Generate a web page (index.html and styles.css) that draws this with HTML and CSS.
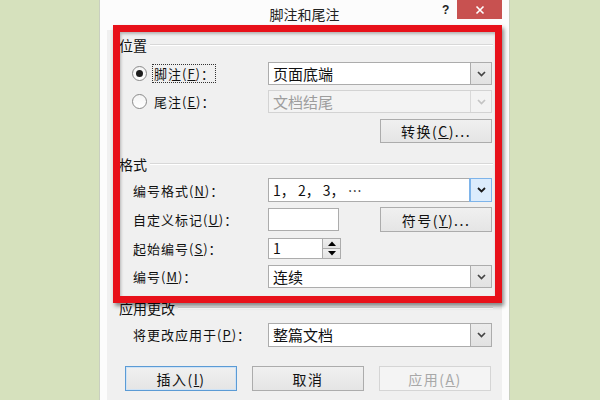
FILE: index.html
```html
<!DOCTYPE html>
<html lang="zh-CN">
<head>
    <meta charset="UTF-8">
    <title>脚注和尾注</title>
    <link rel="stylesheet" href="styles.css">
</head>
<body>
    <div class="dialog">
        <div class="titlebar">
            <span class="title">脚注和尾注</span>
            <span class="help">?</span>
            <span class="close">
                <svg width="10" height="10" viewBox="0 0 10 10"><path d="M1.5 1.5l7 7M8.5 1.5l-7 7" stroke="#fff" stroke-width="1.6"/></svg>
            </span>
        </div>

        <div class="client">
            <div class="group"><span>位置</span></div>

            <div class="row h23 first">
                <div class="label radio-label">
                    <span class="radio checked"></span>
                    <span class="focus">脚注(<u>F</u>)：</span>
                </div>
                <div class="select">
                    <span class="value">页面底端</span>
                    <span class="drop"><svg width="9" height="6" viewBox="0 0 9 6"><path d="M1 1l3.5 3.5L8 1" stroke="#444" stroke-width="1.7" fill="none"/></svg></span>
                </div>
            </div>

            <div class="row h23 gap5">
                <div class="label radio-label">
                    <span class="radio"></span>
                    <span class="nofocus">尾注(<u>E</u>)：</span>
                </div>
                <div class="select disabled">
                    <span class="value">文档结尾</span>
                    <span class="drop"><svg width="9" height="6" viewBox="0 0 9 6"><path d="M1 1l3.5 3.5L8 1" stroke="#c4c4c4" stroke-width="1.7" fill="none"/></svg></span>
                </div>
            </div>

            <div class="row h24 gap6">
                <button class="btn push-right">转换(<u>C</u>)...</button>
            </div>

            <div class="group second"><span>格式</span></div>

            <div class="row h24 gap3">
                <div class="label">编号格式(<u>N</u>)：</div>
                <div class="select focused">
                    <span class="value">1，&nbsp;2，&nbsp;3，&nbsp;…</span>
                    <span class="drop"><svg width="9" height="6" viewBox="0 0 9 6"><path d="M1 1l3.5 3.5L8 1" stroke="#1a1a1a" stroke-width="1.8" fill="none"/></svg></span>
                </div>
            </div>

            <div class="row h25 gap5">
                <div class="label">自定义标记(<u>U</u>)：</div>
                <div class="textbox"></div>
                <button class="btn push-right">符号(<u>Y</u>)...</button>
            </div>

            <div class="row h21 gap6">
                <div class="label">起始编号(<u>S</u>)：</div>
                <div class="spin">
                    <span class="value">1</span>
                    <span class="arrows">
                        <span class="arrow"><svg width="8" height="5" viewBox="0 0 8 5"><path d="M0 5L4 0.5L8 5z" fill="#000"/></svg></span>
                        <span class="arrow"><svg width="8" height="5" viewBox="0 0 8 5"><path d="M0 0L4 4.5L8 0z" fill="#000"/></svg></span>
                    </span>
                </div>
            </div>

            <div class="row h23 gap6">
                <div class="label">编号(<u>M</u>)：</div>
                <div class="select">
                    <span class="value">连续</span>
                    <span class="drop"><svg width="9" height="6" viewBox="0 0 9 6"><path d="M1 1l3.5 3.5L8 1" stroke="#444" stroke-width="1.7" fill="none"/></svg></span>
                </div>
            </div>

            <div class="group third"><span>应用更改</span></div>

            <div class="row h25 gap3">
                <div class="label">将更改应用于(<u>P</u>)：</div>
                <div class="select">
                    <span class="value">整篇文档</span>
                    <span class="drop"><svg width="9" height="6" viewBox="0 0 9 6"><path d="M1 1l3.5 3.5L8 1" stroke="#444" stroke-width="1.7" fill="none"/></svg></span>
                </div>
            </div>

            <div class="buttons">
                <button class="btn default">插入(<u>I</u>)</button>
                <button class="btn">取消</button>
                <button class="btn" disabled>应用(<u>A</u>)</button>
            </div>
        </div>
    </div>

    <!-- red annotation frame drawn over the dialog -->
    <div class="highlight"></div>
</body>
</html>
```

FILE: styles.css
```css
body {
    margin: 0;
    width: 600px;
    height: 400px;
    overflow: hidden;
    background-color: #d6e1bd;
    font-family: "Noto Sans CJK SC", "Liberation Sans", sans-serif;
    color: #111;
    position: relative;
}
.dialog {
    width: 409px;
    height: 400px;
    margin-left: 99px;
    background-color: #fcfcfc;
    border-left: 1px solid #c9cfc0;
    border-right: 1px solid #c9cfc0;
}
.titlebar {
    height: 30px;
    position: relative;
    display: flex;
    justify-content: center;
}
.title {
    font-size: 14px;
    line-height: 30px;
    margin-top: -1px;
    color: #222;
}
.help {
    position: absolute;
    left: 342px;
    top: 0;
    font-family: "Liberation Sans", sans-serif;
    font-weight: bold;
    font-size: 12px;
    line-height: 20px;
    color: #222;
}
.close {
    position: absolute;
    right: 7px;
    top: 0;
    width: 45px;
    height: 19px;
    background-color: #c85150;
    display: flex;
    align-items: center;
    justify-content: center;
}
.client {
    margin: 0 7px;
    height: 370px;
    background-color: #f0f0f0;
    font-size: 13px;
    overflow: hidden;
}
.group {
    display: flex;
    align-items: center;
    height: 22px;
    margin-top: 4px;
    padding-left: 12px;
    padding-right: 9px;
    font-size: 14px;
}
.group::after {
    content: "";
    flex: 1;
    margin-left: 3px;
    border-top: 1px solid #d8d8d8;
    border-bottom: 1px solid #fff;
}
.group.second { margin-top: 10px; }
.group.third { margin-top: 9px; }

.row {
    display: flex;
    align-items: center;
    padding-left: 25px;
    padding-right: 10px;
}
.h21 { height: 21px; }
.h23 { height: 23px; }
.h24 { height: 24px; }
.h25 { height: 25px; }
.first { margin-top: 6px; }
.gap3 { margin-top: 3px; }
.gap5 { margin-top: 5px; }
.gap6 { margin-top: 6px; }

.label {
    width: 135px;
    padding-left: 1px;
    white-space: nowrap;
    letter-spacing: 1px;
}
.radio-label {
    display: flex;
    align-items: center;
    padding-left: 0;
    width: 136px;
}
.radio {
    width: 13px;
    height: 13px;
    border: 1px solid #8a8a8a;
    border-radius: 50%;
    background: linear-gradient(#f4f4f4, #fff);
    position: relative;
    margin-right: 5px;
}
.radio.checked::after {
    content: "";
    position: absolute;
    left: 3px;
    top: 3px;
    width: 7px;
    height: 7px;
    border-radius: 50%;
    background-color: #1e1e1e;
}
.focus, .nofocus {
    padding: 0 0 0 1px;
    border: 1px dotted transparent;
    line-height: 17px;
}
.focus { border-color: #333; }

.select {
    width: 222px;
    height: 21px;
    border: 1px solid #acacac;
    background-color: #fff;
    display: flex;
    align-items: center;
    position: relative;
}
.row.h24 .select, .row.h25 .select { height: 22px; }
.select .value {
    flex: 1;
    padding-left: 4px;
    font-size: 15px;
    line-height: 20px;
}
.select .drop {
    width: 20px;
    height: 100%;
    border-left: 1px solid #acacac;
    background: linear-gradient(#ececec, #e2e2e2);
    display: flex;
    align-items: center;
    justify-content: center;
}
.select.disabled {
    border-color: #d3d3d3;
    background-color: #f3f3f3;
}
.select.disabled .value { color: #9d9d9d; }
.select.disabled .drop {
    border-left-color: #d9d9d9;
    background: #f3f3f3;
}
.select.focused .value {
    font-size: 14px;
}
.select.focused .drop {
    background: #dcecfc;
    border-left-color: #7eb4ea;
    outline: 1px solid #7eb4ea;
}

.textbox {
    width: 69px;
    height: 21px;
    border: 1px solid #acacac;
    background-color: #fff;
}
.spin {
    width: 71px;
    height: 19px;
    border: 1px solid #acacac;
    background-color: #fff;
    display: flex;
}
.spin .value {
    flex: 1;
    padding-left: 4px;
    font-size: 14px;
    line-height: 19px;
}
.spin .arrows {
    width: 17px;
    display: flex;
    flex-direction: column;
    border-left: 1px solid #acacac;
}
.spin .arrow {
    flex: 1;
    display: flex;
    align-items: center;
    justify-content: center;
    background: linear-gradient(#efefef, #e3e3e3);
}
.spin .arrow + .arrow { border-top: 1px solid #acacac; }

.btn {
    width: 112px;
    height: 25px;
    border: 1px solid #acacac;
    background: linear-gradient(#f0f0f0, #e5e5e5);
    font-family: "Noto Sans CJK SC", "Liberation Sans", sans-serif;
    font-size: 14px;
    color: #111;
    padding: 0;
    letter-spacing: 1.5px;
}
.row.h24 .btn { height: 24px; }
.push-right { margin-left: auto; }
.btn.default {
    border-color: #5b9bd5;
    box-shadow: inset 0 0 0 1px #cfe3f6;
}
.btn:disabled {
    background: #f4f4f4;
    border-color: #d5d5d5;
    color: #a8a8a8;
}

.buttons {
    display: flex;
    gap: 15px;
    padding-left: 18px;
    margin-top: 19px;
}

.highlight {
    position: absolute;
    left: 113px;
    top: 25px;
    width: 375px;
    height: 264px;
    border: 7px solid #e8111a;
    box-shadow: 2px 3px 4px rgba(0, 0, 0, 0.45), inset 1px 2px 3px rgba(0, 0, 0, 0.25);
}
```
